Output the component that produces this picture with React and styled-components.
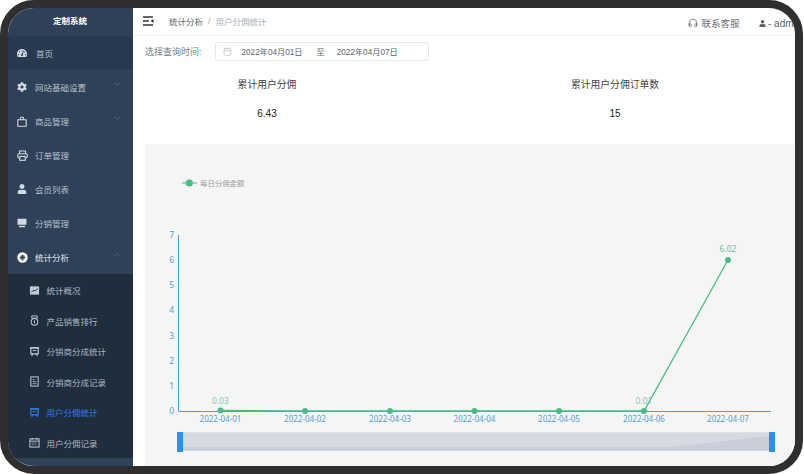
import styled, { createGlobalStyle } from "styled-components";
import { FaTachometerAlt, FaCog, FaUser } from "react-icons/fa";
import { FiChevronDown, FiChevronUp, FiHeadphones, FiCalendar } from "react-icons/fi";

const GlobalStyle = createGlobalStyle`
  html, body {
    margin: 0;
    padding: 0;
    background: #fff;
    overflow: hidden;
  }
`;

const font = `"Liberation Sans", "Noto Sans CJK SC", sans-serif`;

const Frame = styled.div`
  width: 803px;
  height: 474px;
  box-sizing: border-box;
  border: 8px solid #2f2f2f;
  border-radius: 34px;
  overflow: hidden;
  display: flex;
  font-family: ${font};
  background: #fff;
`;

const Sidebar = styled.div`
  width: 125px;
  flex-shrink: 0;
  background: #2f4158;
  color: #b7c0cb;
  font-size: 8.5px;
`;

const Logo = styled.div`
  height: 24px;
  padding: 0 1px 4px 0;
  display: flex;
  align-items: center;
  justify-content: center;
  color: #fff;
  font-size: 8.5px;
  font-weight: bold;
`;

const MenuItem = styled.div`
  height: 34px;
  display: flex;
  align-items: center;
  padding-left: 9px;
  position: relative;
  background: ${(p) => (p.$active ? "#283a50" : "transparent")};
  color: ${(p) => (p.$open ? "#e4e8ec" : "#b7c0cb")};
`;

const MenuIcon = styled.span`
  width: 18px;
  margin-right: ${(p) => p.$gap || 0}px;
  display: flex;
  align-items: center;
  font-size: 10px;
  color: #d3d9e0;
`;

const Arrow = styled.span`
  position: absolute;
  right: 11px;
  top: 10px;
  font-size: 9px;
  color: #5d6f85;
`;

const SubMenu = styled.div`
  background: #1f2d3d;
  padding-top: 1px;
`;

const SubItem = styled.div`
  height: 30.5px;
  display: flex;
  align-items: center;
  padding-left: 20.5px;
  color: ${(p) => (p.$active ? "#2f7cf0" : "#aeb7c2")};
`;

const SubIcon = styled.svg`
  width: 11px;
  height: 11px;
  margin-right: 7px;
  flex-shrink: 0;
`;

const Main = styled.div`
  flex: 1;
  min-width: 0;
  display: flex;
  flex-direction: column;
`;

const Header = styled.div`
  height: 25px;
  padding: 0 0 2px 10px;
  display: flex;
  align-items: center;
  border-bottom: 1px solid #f1f1f1;
  font-size: 8.5px;
  white-space: nowrap;
`;

const Crumb = styled.span`
  color: ${(p) => (p.$muted ? "#a6adb9" : "#5b5f66")};
  margin-left: ${(p) => p.$ml || 0}px;
`;

const Spacer = styled.div`
  flex: 1;
`;

const HeaderRight = styled.div`
  display: flex;
  align-items: center;
  color: #6d7278;
  width: 107px;
  margin-top: 5px;
  overflow: hidden;
  flex-shrink: 0;
  font-size: 9.5px;
  gap: 3.5px;

  & > * {
    flex-shrink: 0;
  }
`;

const Admin = styled.span`
  display: flex;
  align-items: center;
  margin-left: 16px;
  font-size: 10px;
  gap: 2px;
  color: #5b5f66;
`;

const FilterRow = styled.div`
  display: flex;
  align-items: center;
  height: 30px;
  padding-left: 12px;
  font-size: 9px;
  color: #777c84;
`;

const RangeBox = styled.div`
  width: 214px;
  height: 19px;
  margin-left: 13px;
  border: 1px solid #e4e7ed;
  border-radius: 3px;
  display: flex;
  align-items: center;
  color: #60646b;
  padding-left: 7px;
  box-sizing: border-box;
  font-size: 8.2px;
  white-space: nowrap;
`;

const RangeText = styled.span`
  margin-left: ${(p) => p.$ml}px;
`;

const Stats = styled.div`
  display: flex;
  height: 78px;
  padding-left: 12px;
`;

const Stat = styled.div`
  width: ${(p) => p.$w}px;
  flex-shrink: 0;
  display: flex;
  flex-direction: column;
  align-items: center;
  color: #333;
`;

const StatTitle = styled.div`
  font-size: 9.8px;
  margin-top: 11px;
  height: 16px;
  line-height: 16px;
  color: #444;
`;

const StatValue = styled.div`
  font-size: 10px;
  margin-top: 14px;
  line-height: 14px;
  color: #222;
`;

const ChartPanel = styled.div`
  margin-left: 12px;
  flex: 1;
  background: #f5f5f5;
  overflow: hidden;
`;

const ChartSvg = styled.svg`
  display: block;
  width: 651px;
  height: 322px;
  font-family: "Noto Sans", "Noto Sans CJK SC", sans-serif;
`;

const BagIcon = () => (
  <svg width="10" height="11" viewBox="0 0 10 11">
    <path d="M0.8 3.8h8.4v6.4H0.8z" fill="none" stroke="currentColor" strokeWidth="1.1" />
    <path d="M3.6 3.8V1.2h2.8v2.6" fill="none" stroke="currentColor" strokeWidth="1" />
  </svg>
);

const PrinterIcon = () => (
  <svg width="11" height="11" viewBox="0 0 11 11">
    <path d="M2.5 3.8V1h6v2.8" fill="none" stroke="currentColor" strokeWidth="1.1" />
    <rect x="0.8" y="3.8" width="9.4" height="4.2" rx="1.2" fill="none" stroke="currentColor" strokeWidth="1.1" />
    <rect x="2.8" y="6.4" width="5.4" height="3.9" fill="#2f4158" stroke="currentColor" strokeWidth="1.1" />
  </svg>
);

const ScreenIcon = () => (
  <svg width="10" height="10" viewBox="0 0 10 10">
    <rect x="0.5" y="0.8" width="9" height="6" rx="0.6" fill="currentColor" />
    <path d="M2 8.4h6" stroke="currentColor" strokeWidth="1.5" />
  </svg>
);

const AddIcon = () => (
  <svg width="11" height="11" viewBox="0 0 11 11">
    <circle cx="5.5" cy="5.5" r="5.2" fill="#fff" />
    <path d="M5.5 2.8v5.4M2.8 5.5h5.4" stroke="#2f4158" strokeWidth="2" />
  </svg>
);

const menu = [
  { label: "首页", icon: <FaTachometerAlt />, active: true, gap: 1 },
  { label: "网站基础设置", icon: <FaCog />, arrow: true },
  { label: "商品管理", icon: <BagIcon />, arrow: true },
  { label: "订单管理", icon: <PrinterIcon /> },
  { label: "会员列表", icon: <FaUser /> },
  { label: "分销管理", icon: <ScreenIcon /> },
];

const Presentation = ({ color }) => (
  <>
    <path d="M2 2h8v6.5H2z" fill="none" stroke={color} strokeWidth="1.3" />
    <path d="M1 2h10M4 8.5 3 11M8 8.5 9 11" stroke={color} strokeWidth="1.2" fill="none" />
    <path d="M4 5h4" stroke={color} strokeWidth="1" />
  </>
);

const subMenu = [
  {
    label: "统计概况",
    icon: (c) => (
      <>
        <rect x="1" y="1.5" width="10" height="9" fill={c} />
        <path d="M2.5 8 5 5.5l1.5 1L9.5 4" stroke="#1f2d3d" strokeWidth="1" fill="none" />
      </>
    ),
  },
  {
    label: "产品销售排行",
    icon: (c) => (
      <>
        <path d="M3 1h6v2.5H3z" fill="none" stroke={c} strokeWidth="1" />
        <circle cx="6" cy="7.5" r="3.6" fill="none" stroke={c} strokeWidth="1.1" />
        <path d="M6 5.8v3.4" stroke={c} strokeWidth="1" />
      </>
    ),
  },
  { label: "分销商分成统计", icon: (c) => <Presentation color={c} /> },
  {
    label: "分销商分成记录",
    icon: (c) => (
      <>
        <rect x="2" y="1" width="8" height="10" fill="none" stroke={c} strokeWidth="1.1" />
        <path d="M4 4h2M4 6.2h4M4 8.4h4" stroke={c} strokeWidth="0.9" />
      </>
    ),
  },
  { label: "用户分佣统计", active: true, icon: (c) => <Presentation color={c} /> },
  {
    label: "用户分佣记录",
    icon: (c) => (
      <>
        <rect x="1" y="2" width="10" height="9" fill="none" stroke={c} strokeWidth="1.1" />
        <path d="M1 4.5h10M3.5 1v2M8.5 1v2" stroke={c} strokeWidth="1" />
        <path d="M3 6.5h6M3 8.5h6" stroke={c} strokeWidth="1" strokeDasharray="1 1" />
      </>
    ),
  },
];

const yTicks = [
  [0, 410.5],
  [1, 385.5],
  [2, 360.5],
  [3, 335.5],
  [4, 310],
  [5, 285],
  [6, 260],
  [7, 235],
];

const points = [
  { x: 220.5, y: 410.4, day: "2022-04-01" },
  { x: 305, y: 411, day: "2022-04-02" },
  { x: 390, y: 411, day: "2022-04-03" },
  { x: 474.5, y: 411, day: "2022-04-04" },
  { x: 559, y: 411, day: "2022-04-05" },
  { x: 644, y: 411, day: "2022-04-06" },
  { x: 728, y: 260, day: "2022-04-07" },
];

function Chart() {
  const axis = "#4f9fe0";
  const green = "#47bd84";
  return (
    <ChartSvg viewBox="145 144 651 322">
      <line x1="182" y1="183" x2="197" y2="183" stroke={green} strokeWidth="1" />
      <circle cx="189.3" cy="183" r="3.6" fill={green} />
      <text x="200" y="186" fontSize="7.4" fill="#9a9d9f">每日分佣金额</text>

      <path d="M178.5 235V411.5H771" fill="none" stroke={axis} strokeWidth="1" />
      {yTicks.map(([v, y]) => (
        <text key={v} x="174" y={y + 3} fontSize="8.5" fill={axis} textAnchor="end">{v}</text>
      ))}
      {points.map((p) => (
        <text key={p.day} x={p.x} y={422} fontSize="8" fill={axis} textAnchor="middle">{p.day}</text>
      ))}
      <polyline points={points.map((p) => `${p.x},${p.y}`).join(" ")} fill="none" stroke={green} strokeWidth="1.3" />
      {points.map((p) => (
        <circle key={p.day} cx={p.x} cy={p.y} r="3" fill={green} />
      ))}
      <text x="220.5" y="403.5" fontSize="8.5" fill="#86c9a6" textAnchor="middle">0.03</text>
      <text x="644" y="403.5" fontSize="8.5" fill="#86c9a6" textAnchor="middle">0.01</text>
      <text x="728" y="252" fontSize="8.5" fill="#6fbf96" textAnchor="middle">6.02</text>

      <rect x="183" y="432.3" width="586" height="18.4" fill="#d5dae3" />
      <path d="M183 450.7V447H673L769 436V450.7Z" fill="#c9ced9" />
      <rect x="177" y="432" width="6" height="20" fill="#2b90f5" />
      <rect x="769" y="432" width="6" height="20" fill="#2b90f5" />
    </ChartSvg>
  );
}

export default function App() {
  return (
    <>
      <GlobalStyle />
      <Frame>
        <Sidebar>
          <Logo>定制系统</Logo>
          {menu.map((m) => (
            <MenuItem key={m.label} $active={m.active}>
              <MenuIcon $gap={m.gap}>{m.icon}</MenuIcon>
              {m.label}
              {m.arrow && (
                <Arrow>
                  <FiChevronDown />
                </Arrow>
              )}
            </MenuItem>
          ))}
          <MenuItem $open>
            <MenuIcon>
              <AddIcon />
            </MenuIcon>
            统计分析
            <Arrow>
              <FiChevronUp />
            </Arrow>
          </MenuItem>
          <SubMenu>
            {subMenu.map((s) => (
              <SubItem key={s.label} $active={s.active}>
                <SubIcon viewBox="0 0 12 12">{s.icon(s.active ? "#2f7cf0" : "#c3cad3")}</SubIcon>
                {s.label}
              </SubItem>
            ))}
          </SubMenu>
        </Sidebar>
        <Main>
          <Header>
            <svg width="11" height="10" viewBox="0 0 11 10">
              <path d="M0 1h10M0 5h6M0 9h10" stroke="#333" strokeWidth="1.4" />
              <path d="M10.5 3v4L7.5 5z" fill="#333" />
            </svg>
            <Crumb $ml={15}>统计分析</Crumb>
            <Crumb $muted $ml={5}>/</Crumb>
            <Crumb $muted $ml={5}>用户分佣统计</Crumb>
            <Spacer />
            <HeaderRight>
              <FiHeadphones size={10} />
              <span>联系客服</span>
              <Admin>
                <FaUser size={7} /> - admin
              </Admin>
            </HeaderRight>
          </Header>
          <FilterRow>
            选择查询时间:
            <RangeBox>
              <FiCalendar size={9} color="#c0c4cc" />
              <RangeText $ml={10}>2022年04月01日</RangeText>
              <RangeText $ml={14}>至</RangeText>
              <RangeText $ml={12}>2022年04月07日</RangeText>
            </RangeBox>
          </FilterRow>
          <Stats>
            <Stat $w={244}>
              <StatTitle>累计用户分佣</StatTitle>
              <StatValue>6.43</StatValue>
            </Stat>
            <Stat $w={452}>
              <StatTitle>累计用户分佣订单数</StatTitle>
              <StatValue>15</StatValue>
            </Stat>
          </Stats>
          <ChartPanel>
            <Chart />
          </ChartPanel>
        </Main>
      </Frame>
    </>
  );
}
